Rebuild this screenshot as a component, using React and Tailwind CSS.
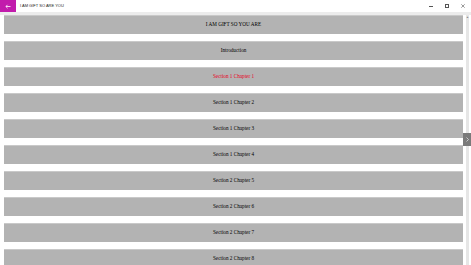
import React from 'react';

const items = [
  { label: 'I AM GIFT SO YOU ARE' },
  { label: 'Introduction' },
  { label: 'Section 1 Chapter 1', red: true },
  { label: 'Section 1 Chapter 2' },
  { label: 'Section 1 Chapter 3' },
  { label: 'Section 1 Chapter 4' },
  { label: 'Section 2 Chapter 5' },
  { label: 'Section 2 Chapter 6' },
  { label: 'Section 2 Chapter 7' },
  { label: 'Section 2 Chapter 8' },
];

export default function App() {
  return (
    <div className="w-[471px] h-[265px] overflow-hidden bg-white flex flex-col" style={{ fontFamily: '"Liberation Serif", serif' }}>
      {/* title bar */}
      <div className="h-[12px] flex items-center shrink-0">
        <div className="w-[16px] h-[12px] bg-[#c21cac] flex items-center justify-center">
          <svg width="6" height="5" viewBox="0 0 6 5">
            <path d="M5.5 2.5H1M2.6 0.8L0.9 2.5L2.6 4.2" stroke="white" strokeWidth="0.8" fill="none" />
          </svg>
        </div>
        <span className="ml-[4px] text-[4px] text-[#222]" style={{ fontFamily: '"Liberation Sans", sans-serif' }}>I AM GIFT SO ARE YOU</span>
        <div className="ml-auto flex items-center gap-[12px] pr-[6px]">
          <span className="w-[4px] h-[0.6px] bg-[#555]" />
          <span className="w-[4px] h-[4px] border-[0.6px] border-[#555]" />
          <svg width="4" height="4" viewBox="0 0 4 4">
            <path d="M0.3 0.3L3.7 3.7M3.7 0.3L0.3 3.7" stroke="#555" strokeWidth="0.6" />
          </svg>
        </div>
      </div>
      <div className="h-[3px] bg-[#ececec] shrink-0" />
      {/* content */}
      <div className="flex flex-1 relative">
        <div className="flex-1 flex flex-col gap-[7px] pl-[4px] pr-[3px]">
          {items.map((it) => (
            <div
              key={it.label}
              className="h-[19px] shrink-0 bg-[#b3b3b3] border-t border-[#c9c9c9] flex items-center justify-center"
            >
              <span className={`text-[5.2px] ${it.red ? 'text-[#e8001c]' : 'text-[#000]'}`}>{it.label}</span>
            </div>
          ))}
        </div>
        <div className="w-[3px] bg-[#e6e6e6] shrink-0 mr-[2px] flex flex-col items-center">
          <div className="text-[3px] leading-none text-[#888] mt-[1px]">▲</div>
        </div>
        <div className="absolute right-0 top-[118px] w-[8px] h-[13px] bg-[#7a7a7a] flex items-center justify-center">
          <svg width="3" height="5" viewBox="0 0 3 5">
            <path d="M0.5 0.5L2.5 2.5L0.5 4.5" stroke="#ddd" strokeWidth="0.8" fill="none" />
          </svg>
        </div>
      </div>
    </div>
  );
}
